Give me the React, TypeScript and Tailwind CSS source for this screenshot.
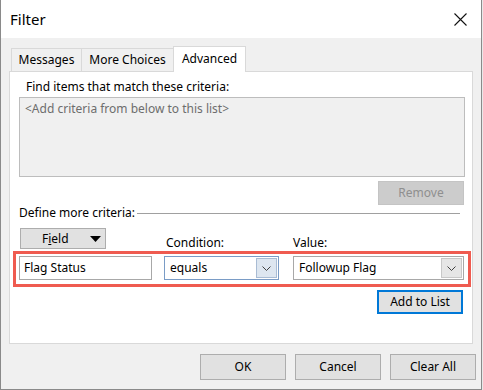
const font = { fontFamily: '"Noto Sans", "Open Sans", sans-serif' };

function Chevron() {
  return (
    <svg width="9" height="5" viewBox="0 0 9 5" className="block">
      <path d="M0.5 0.5 L4.5 4.5 L8.5 0.5" fill="none" stroke="#404040" strokeWidth="1" />
    </svg>
  );
}

function Combo({ value, width, focused }: { value: string; width: string; focused?: boolean }) {
  return (
    <div className={`${width} h-[24px] flex items-stretch bg-white border ${focused ? 'border-[#7a9cc6]' : 'border-[#a8a8a8]'}`}>
      <div className="flex-1 flex items-center pl-[5px] text-[12px] text-black">{value}</div>
      <div className={`w-[21px] my-[1px] mr-[1px] flex items-center justify-center border ${focused ? 'bg-[#dde6f0] border-[#a9bcd4]' : 'bg-[#e6e6e6] border-[#c8c8c8]'}`}>
        <Chevron />
      </div>
    </div>
  );
}

function Btn({ label }: { label: string }) {
  return (
    <div className="w-[86px] h-[26px] flex items-center justify-center bg-[#e1e1e1] border border-[#adadad] text-[12px] text-black">
      {label}
    </div>
  );
}

export default function App() {
  return (
    <div className="w-[483px] h-[390px] bg-[#e8e8e8]" style={font}>
      <div className="w-[482px] h-[390px] flex flex-col border-l border-r border-b border-[#8a8a8a]">
        {/* Title bar */}
        <div className="h-[38px] bg-white flex items-center justify-between pl-[9px] pr-[14px]">
          <span className="text-[15px] text-black">Filter</span>
          <svg width="13" height="13" viewBox="0 0 13 13">
            <path d="M0.5 0.5 L12.5 12.5 M12.5 0.5 L0.5 12.5" stroke="#111" strokeWidth="1.1" />
          </svg>
        </div>

        {/* Body */}
        <div className="flex-1 bg-[#f0f0f0] pl-[8px] pr-[8px] pt-[8px] flex flex-col">
          {/* Tabs */}
          <div className="flex items-end h-[25px] pl-[2px]">
            <div className="w-[70px] h-[23px] border-l border-t border-[#d9d9d9] flex items-center justify-center text-[12px] text-black">Messages</div>
            <div className="w-[92px] h-[23px] border-l border-t border-[#d9d9d9] flex items-center justify-center text-[12px] text-black">More Choices</div>
            <div className="w-[73px] h-[26px] -mb-px relative z-10 bg-white border-l border-t border-r border-[#d9d9d9] flex items-start justify-center pt-[3px] text-[12px] text-black">Advanced</div>
          </div>

          {/* Panel */}
          <div className="h-[273px] w-[464px] bg-white border border-[#d9d9d9] pl-[9px] pr-[7px] flex flex-col">
            <div className="mt-[7px] ml-[7px] h-[16px] leading-[16px] text-[12px] text-black">Find items that match these criteria:</div>
            <div className="mt-[2px] h-[80px] bg-[#f0f0f0] border border-[#bdbdbd] pl-[5px] pt-[2px] text-[12px] text-[#6d6d6d]">
              &lt;Add criteria from below to this list&gt;
            </div>
            <div className="mt-[4px] self-end mr-[1px] w-[86px] h-[24px] flex items-center justify-center bg-[#cccccc] border border-[#c4c4c4] text-[12px] text-[#8f8f8f]">Remove</div>

            <div className="h-[16px] flex items-center">
              <span className="text-[12px] text-black leading-[16px]">Define more criteria:</span>
              <div className="flex-1 h-px bg-[#a0a0a0] ml-[2px] mr-[5px] mt-[1px]" />
            </div>

            <div className="mt-[7px] h-[23px] flex items-start">
              <div className="ml-[1px] w-[86px] h-[21px] bg-[#e1e1e1] border border-[#adadad] flex items-center text-[12px] text-black">
                <span className="ml-[21px]">F<span className="underline">i</span>eld</span>
                <svg width="11" height="6" viewBox="0 0 11 6" className="ml-[21px]">
                  <path d="M0 0 H11 L5.5 6 Z" fill="#000" />
                </svg>
              </div>
              <div className="self-end ml-[60px] w-[127px] h-[16px] leading-[16px] text-[12px] text-black">Condition:</div>
              <div className="self-end h-[16px] leading-[16px] text-[12px] text-black">Value:</div>
            </div>

            {/* Highlighted criteria row */}
            <div className="-ml-[6px] -mr-[6px] h-[36px] border-[3px] border-[#ef5b50] pl-[3px] pr-[4px] pt-[2px] flex items-start">
              <div className="w-[133px] h-[24px] bg-white border border-[#a8a8a8] flex items-center pl-[4px] text-[12px] text-black">Flag Status</div>
              <div className="ml-[12px]"><Combo value="equals" width="w-[115px]" focused /></div>
              <div className="ml-[14px]"><Combo value="Followup Flag" width="w-[171px]" /></div>
            </div>

            <div className="mt-[3px] self-end mr-[2px] w-[86px] h-[24px] flex items-center justify-center bg-[#e1e1e1] border-2 border-[#0078d7] text-[12px] text-black">Add to List</div>
          </div>

          {/* Footer buttons */}
          <div className="mt-[10px] flex justify-end gap-[9px] -mr-[3px]">
            <Btn label="OK" />
            <Btn label="Cancel" />
            <Btn label="Clear All" />
          </div>
        </div>
      </div>
    </div>
  );
}
